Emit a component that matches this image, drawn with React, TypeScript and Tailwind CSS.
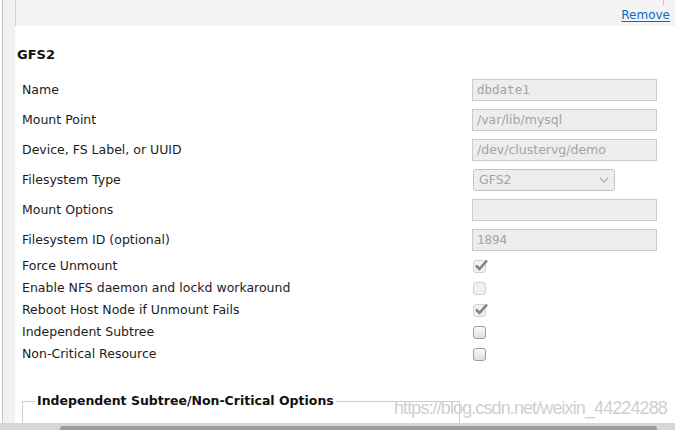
import React from "react";

const labelFont = { fontFamily: '"DejaVu Sans", Verdana, sans-serif' };

function Check({ checked, disabled }: { checked?: boolean; disabled?: boolean }) {
  return (
    <span
      className={
        disabled
          ? "relative inline-block w-[13px] h-[13px] rounded-[3px] border border-[#d2d2d2] bg-[#f1f1f1]"
          : "relative inline-block w-[13px] h-[13px] rounded-[3px] border border-[#9c9c9c] bg-gradient-to-b from-[#fbfbfb] to-[#dedede]"
      }
    >
      {checked && (
        <svg
          viewBox="0 0 14 14"
          className="absolute left-[0px] top-[-3px] w-[14px] h-[14px]"
        >
          <path
            d="M2 7.5 L5.5 11 L13 2.5"
            fill="none"
            stroke="#808080"
            strokeWidth="2.5"
          />
        </svg>
      )}
    </span>
  );
}

function TextBox({ value, mono }: { value: string; mono?: boolean }) {
  return (
    <div
      className="w-[185px] h-[22px] border border-[#cbcbcb] bg-[#ededed] px-[4px] flex items-center text-[12.5px] text-[#a4a4a4]"
      style={
        mono
          ? { fontFamily: '"DejaVu Sans Mono", monospace' }
          : labelFont
      }
    >
      {value}
    </div>
  );
}

function InputRow({ label, children }: { label: string; children: React.ReactNode }) {
  return (
    <div className="shrink-0 h-[30px] flex items-center">
      <div className="w-[457px] pl-[7px] text-[12.5px] text-[#1c1c1c]">{label}</div>
      {children}
    </div>
  );
}

function CheckRow({ label, checked, disabled }: { label: string; checked?: boolean; disabled?: boolean }) {
  return (
    <div className="shrink-0 h-[22px] flex items-center">
      <div className="w-[458px] pl-[7px] text-[12.5px] text-[#1c1c1c]">{label}</div>
      <Check checked={checked} disabled={disabled} />
    </div>
  );
}

export default function App() {
  return (
    <main
      className="relative w-[675px] h-[430px] overflow-hidden bg-white flex flex-col"
      style={labelFont}
    >
      <div className="flex flex-1 min-h-0 overflow-hidden">
        {/* LEFT STRIP */}
        <div className="w-[2px] bg-white" />
        <div className="w-px bg-[#c4c4c4]" />
        <div className="w-[12px] bg-[#f1f1f1]" />

        {/* CONTENT */}
        <div className="flex-1 flex flex-col">
          <div className="shrink-0 relative h-[26px] bg-[#f4f4f4] border-l border-[#cfcfcf] flex items-start justify-end pr-[5px]">
            <div className="absolute right-[11px] top-0 w-px h-[5px] bg-[#c4c4c4]" />
            <a className="mt-[6px] text-[12px] text-[#0a6acb] underline underline-offset-2">
              Remove
            </a>
          </div>

          <h2 className="shrink-0 pt-[21px] pl-[2px] h-[49px] leading-[16px] text-[13px] font-bold text-[#111]">
            GFS2
          </h2>

          <InputRow label="Name">
            <TextBox value="dbdate1" mono />
          </InputRow>
          <InputRow label="Mount Point">
            <TextBox value="/var/lib/mysql" />
          </InputRow>
          <InputRow label="Device, FS Label, or UUID">
            <TextBox value="/dev/clustervg/demo" />
          </InputRow>
          <InputRow label="Filesystem Type">
            <div className="ml-px w-[142px] h-[22px] rounded-[3px] border border-[#c4c4c4] bg-[#ededed] pl-[5px] pr-[5px] flex items-center justify-between text-[12.5px] text-[#a4a4a4]">
              <span>GFS2</span>
              <svg viewBox="0 0 10 6" className="w-[10px] h-[6px]">
                <path d="M1 1 L5 5 L9 1" fill="none" stroke="#b0b0b0" strokeWidth="1.4" />
              </svg>
            </div>
          </InputRow>
          <InputRow label="Mount Options">
            <TextBox value="" />
          </InputRow>
          <InputRow label="Filesystem ID (optional)">
            <TextBox value="1894" mono />
          </InputRow>

          <CheckRow label="Force Unmount" checked disabled />
          <CheckRow label="Enable NFS daemon and lockd workaround" disabled />
          <CheckRow label="Reboot Host Node if Unmount Fails" checked disabled />
          <CheckRow label="Independent Subtree" />
          <CheckRow label="Non-Critical Resource" />

          {/* OPTIONS */}
          <fieldset className="shrink-0 mt-[28px] ml-[7px] w-[438px] h-[60px] border border-[#cccccc] px-[12px]">
            <legend className="px-[2px] text-[12.5px] font-bold text-[#111] leading-[16px]">
              Independent Subtree/Non-Critical Options
            </legend>
          </fieldset>
        </div>
      </div>

      {/* SCROLLBAR */}
      <div className="shrink-0 h-[7px] bg-[#d6d6d6] pt-[3px] pl-[60px] pr-[18px]">
        <div className="h-full rounded-t-[3px] bg-[#9d9d9d]" />
      </div>

      {/* WATERMARK */}
      <div
        className="absolute left-[394px] top-[397px] text-[18px] tracking-[-0.05em] text-[#cfcfcf] leading-[22px]"
        style={{ fontFamily: '"Liberation Sans", Arial, sans-serif' }}
      >
        https://blog.csdn.net/weixin_44224288
      </div>
    </main>
  );
}
